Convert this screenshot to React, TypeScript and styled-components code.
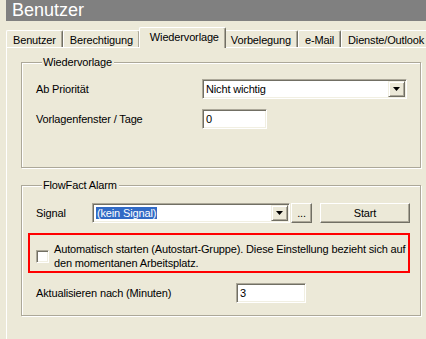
import React from 'react';
import styled, { createGlobalStyle } from 'styled-components';

const Global = createGlobalStyle`
  html, body { margin: 0; padding: 0; background: #ECE9D8; overflow: hidden; }
  body { font-family: "Liberation Sans", Arial, sans-serif; font-size: 11px; letter-spacing: -0.15px; color: #000; }
  * { box-sizing: border-box; }
`;

const Window = styled.div`
  width: 426px;
  height: 339px;
  overflow: hidden;
  padding-left: 6px;
  display: flex;
  flex-direction: column;
`;

const TitleBar = styled.div`
  height: 21px;
  flex-shrink: 0;
  background: #808080;
  color: #fff;
  font-size: 18px;
  letter-spacing: 0;
  line-height: 21px;
  padding-left: 6px;
`;

const TabStrip = styled.div`
  margin-top: 6px;
  height: 20px;
  flex-shrink: 0;
  display: flex;
  align-items: flex-end;
  white-space: nowrap;
  position: relative;
  z-index: 1;
`;

const Tab = styled.div<{ $active?: boolean }>`
  flex-shrink: 0;
  height: ${p => (p.$active ? 21 : 17)}px;
  margin: ${p => (p.$active ? '0 -2px -1px -1px' : '0')};
  padding: ${p => (p.$active ? '3px 6px 0 10px' : '3px 6px 0 6px')};
  line-height: 13px;
  background: #ECE9D8;
  border-top: 1px solid #fff;
  border-left: 1px solid #fff;
  border-right: 1px solid #716F64;
  border-radius: 2px 2px 0 0;
  box-shadow: inset -1px 0 0 #ACA899;
  position: relative;
  z-index: ${p => (p.$active ? 2 : 1)};
`;

const Panel = styled.div`
  flex: 1;
  border-top: 1px solid #fff;
  border-left: 1px solid #fff;
  padding: 8px 0 0 14px;
  display: flex;
  flex-direction: column;
  gap: 11px;
`;

const Group = styled.fieldset<{ $pt: number; $pb: number }>`
  width: 400px;
  margin: 0;
  padding: ${p => p.$pt}px 14px ${p => p.$pb}px 14px;
  border: 1px solid #ACA899;
  box-shadow: 1px 1px 0 #fff, inset 1px 1px 0 #fff;
  display: flex;
  flex-direction: column;
  gap: 10px;
  min-width: 0;
`;

const Legend = styled.legend`
  padding: 0 2px 0 1px;
  margin-left: 6px;
  line-height: 13px;
  background: #ECE9D8;
`;

const Row = styled.div`
  display: flex;
  align-items: center;
  height: 20px;
`;

const Label = styled.span<{ $w: number }>`
  width: ${p => p.$w}px;
  flex-shrink: 0;
  white-space: nowrap;
`;

const Sunken = styled.div<{ $w: number }>`
  width: ${p => p.$w}px;
  height: 20px;
  background: #fff;
  border: 1px solid;
  border-color: #ACA899 #fff #fff #ACA899;
  box-shadow: inset 1px 1px 0 #716F64, inset -1px -1px 0 #F1EFE2;
  padding: 1px;
  display: flex;
  align-items: center;
  flex-shrink: 0;
`;

const FieldText = styled.span`
  padding-left: 2px;
  white-space: nowrap;
  flex: 1;
`;

const Selected = styled.span`
  background: #316AC5;
  color: #fff;
  padding: 0 1px;
  line-height: 13px;
`;

const DropButton = styled.div`
  width: 17px;
  align-self: stretch;
  flex-shrink: 0;
  background: #ECE9D8;
  border: 1px solid;
  border-color: #F1EFE2 #716F64 #716F64 #F1EFE2;
  box-shadow: inset 1px 1px 0 #fff, inset -1px -1px 0 #ACA899;
  display: flex;
  align-items: center;
  justify-content: center;
`;

const Button = styled.div<{ $w: number; $ml: number }>`
  width: ${p => p.$w}px;
  height: 20px;
  margin-left: ${p => p.$ml}px;
  flex-shrink: 0;
  background: #ECE9D8;
  border: 1px solid;
  border-color: #fff #716F64 #716F64 #fff;
  box-shadow: inset -1px -1px 0 #ACA899;
  display: flex;
  align-items: center;
  justify-content: center;
  padding-bottom: 1px;
`;

const Highlight = styled.div`
  width: 382px;
  margin-left: -8px;
  border: 2px solid #FF0000;
  padding: 7px 4px 1px 6px;
  display: flex;
  align-items: center;
  gap: 5px;
`;

const CheckBox = styled.div`
  width: 13px;
  height: 13px;
  flex-shrink: 0;
  background: #fff;
  border: 1px solid;
  border-color: #ACA899 #fff #fff #ACA899;
  box-shadow: inset 1px 1px 0 #716F64, inset -1px -1px 0 #F1EFE2;
`;

const CheckText = styled.div`
  line-height: 14px;
  white-space: nowrap;
`;

const Arrow = () => (
  <svg width="7" height="4" viewBox="0 0 7 4">
    <polygon points="0,0 7,0 3.5,4" fill="#000" />
  </svg>
);

const tabs = ['Benutzer', 'Berechtigung', 'Wiedervorlage', 'Vorbelegung', 'e-Mail', 'Dienste/Outlook'];

export default function App() {
  return (
    <>
      <Global />
      <Window>
        <TitleBar>Benutzer</TitleBar>
        <TabStrip>
          {tabs.map(t => (
            <Tab key={t} $active={t === 'Wiedervorlage'}>{t}</Tab>
          ))}
        </TabStrip>
        <Panel>
          <Group $pt={10} $pb={38}>
            <Legend>Wiedervorlage</Legend>
            <Row>
              <Label $w={166}>Ab Priorität</Label>
              <Sunken $w={205}>
                <FieldText>Nicht wichtig</FieldText>
                <DropButton><Arrow /></DropButton>
              </Sunken>
            </Row>
            <Row>
              <Label $w={166}>Vorlagenfenster / Tage</Label>
              <Sunken $w={65}>
                <FieldText>0</FieldText>
              </Sunken>
            </Row>
          </Group>
          <Group $pt={11} $pb={12}>
            <Legend>FlowFact Alarm</Legend>
            <Row>
              <Label $w={56}>Signal</Label>
              <Sunken $w={198}>
                <FieldText><Selected>(kein Signal)</Selected></FieldText>
                <DropButton><Arrow /></DropButton>
              </Sunken>
              <Button $w={21} $ml={1}>...</Button>
              <Button $w={90} $ml={8}>Start</Button>
            </Row>
            <Highlight>
              <CheckBox />
              <CheckText>
                Automatisch starten (Autostart-Gruppe). Diese Einstellung bezieht sich auf<br />
                den momentanen Arbeitsplatz.
              </CheckText>
            </Highlight>
            <Row>
              <Label $w={200}>Aktualisieren nach (Minuten)</Label>
              <Sunken $w={70}>
                <FieldText>3</FieldText>
              </Sunken>
            </Row>
          </Group>
        </Panel>
      </Window>
    </>
  );
}
